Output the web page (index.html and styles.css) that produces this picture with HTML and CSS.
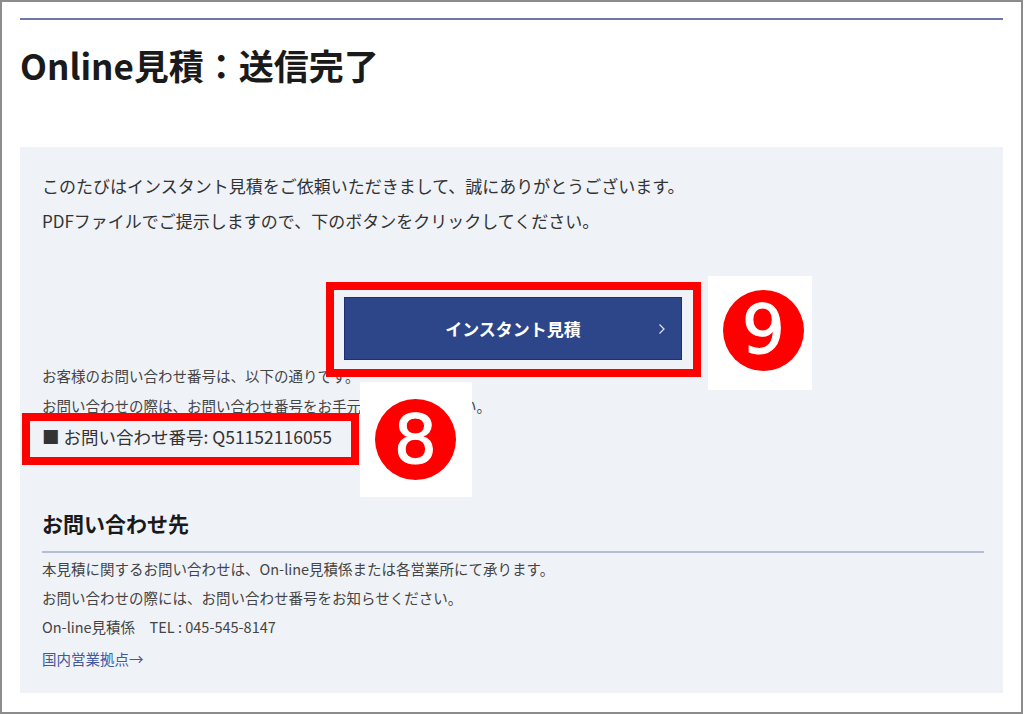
FILE: index.html
```html
<!DOCTYPE html>
<html lang="ja">
<head>
    <meta charset="UTF-8">
    <meta name="viewport" content="width=device-width, initial-scale=1.0">
    <title>Online見積：送信完了</title>
    <link rel="stylesheet" href="styles.css">
</head>
<body>
    <div class="frame">
        <h1 class="title">Online見積：送信完了</h1>

        <section class="panel">
            <p class="lead">
                このたびはインスタント見積をご依頼いただきまして、誠にありがとうございます。<br>
                PDFファイルでご提示しますので、下のボタンをクリックしてください。
            </p>

            <div class="btn-wrap">
                <div class="btn-box">
                    <a class="btn" href="#">インスタント見積
                        <svg class="chev" width="8" height="12" viewBox="0 0 8 12">
                            <polyline points="1.5,1.5 6,6 1.5,10.5" fill="none" stroke="currentColor" stroke-width="1.3"/>
                        </svg>
                    </a>
                    <span class="mark mark-btn"></span>
                    <span class="badge badge-9"><span class="badge-circle"><span class="badge-num">9</span></span></span>
                </div>
            </div>

            <p class="note">
                お客様のお問い合わせ番号は、以下の通りです。<br>
                お問い合わせの際は、お問い合わせ番号をお手元にお控えください。
            </p>

            <p class="inq-no">■ お問い合わせ番号: Q51152116055
                <span class="mark mark-no"></span>
                <span class="badge badge-8"><span class="badge-circle"><span class="badge-num">8</span></span></span>
            </p>

            <h2 class="sub">お問い合わせ先</h2>
            <div class="contact">
                <p>本見積に関するお問い合わせは、On-line見積係または各営業所にて承ります。</p>
                <p>お問い合わせの際には、お問い合わせ番号をお知らせください。</p>
                <p>On-line見積係　TEL : 045-545-8147</p>
                <a class="link" href="#">国内営業拠点→</a>
            </div>
        </section>
    </div>
</body>
</html>
```

FILE: styles.css
```css
* {
    margin: 0;
    padding: 0;
    box-sizing: border-box;
}

body {
    font-family: "Noto Sans CJK JP", "Noto Sans", sans-serif;
    background: #fff;
    color: #333;
}

.frame {
    width: 1023px;
    height: 714px;
    border: 2px solid #8c8c8c;
    padding: 16px 18px 0 18px;
    overflow: hidden;
}

.title {
    border-top: 2px solid #6d77a8;
    padding-top: 21px;
    font-size: 35px;
    line-height: 48px;
    font-weight: bold;
    color: #1a1a1a;
}

.panel {
    margin-top: 58px;
    background: #eff2f7;
    padding: 21px 19px 19px 22px;
}

.lead {
    font-size: 17px;
    line-height: 35px;
    color: #333;
}

.btn-wrap {
    margin-top: 59px;
    display: flex;
    justify-content: center;
}

.btn-box {
    position: relative;
}

.btn {
    display: flex;
    align-items: center;
    justify-content: center;
    width: 338px;
    height: 63px;
    background: #2d4689;
    border: 1px solid #1c2d7a;
    color: #fff;
    font-size: 17px;
    font-weight: bold;
    text-decoration: none;
    position: relative;
}

.chev {
    position: absolute;
    right: 15px;
    top: 25px;
    color: #d8def0;
}

/* red annotation frames */
.mark {
    position: absolute;
    border: 8px solid #ff0000;
    pointer-events: none;
}

.mark-btn {
    left: -18px;
    top: -15px;
    right: -19px;
    bottom: -17px;
}

.mark-no {
    left: -20px;
    top: -9px;
    width: 337px;
    height: 52px;
}

/* numbered badges */
.badge {
    position: absolute;
    background: #fff;
    display: flex;
    align-items: center;
    z-index: 2;
}

.badge-9 {
    left: calc(100% + 26px);
    top: -21px;
    width: 104px;
    height: 114px;
    padding: 0 0 6px 15px;
}

.badge-8 {
    left: 318px;
    top: -40px;
    width: 112px;
    height: 115px;
    padding: 0 0 0 15px;
}

.badge-circle {
    width: 81px;
    height: 81px;
    border-radius: 50%;
    background: #ff0000;
    display: flex;
    align-items: center;
    justify-content: center;
}

.badge-num {
    font-family: "DejaVu Sans", sans-serif;
    font-weight: normal;
    font-size: 68px;
    line-height: 1;
    color: #fff;
    -webkit-text-stroke: 1px #fff;
}

.note {
    margin-top: 1px;
    font-size: 14.5px;
    line-height: 30px;
    color: #444;
}

.inq-no {
    position: relative;
    margin-top: 1px;
    font-size: 17.5px;
    line-height: 30px;
    color: #333;
}

.sub {
    margin-top: 56px;
    padding-bottom: 13px;
    border-bottom: 2px solid #b8bdd6;
    font-size: 21px;
    line-height: 30px;
    font-weight: bold;
    color: #1a1a1a;
}

.contact {
    padding-top: 1px;
    font-size: 14.5px;
    line-height: 29px;
    color: #444;
}

.link {
    display: block;
    margin-top: 3px;
    line-height: 30px;
    color: #4059a0;
    text-decoration: none;
}
```
